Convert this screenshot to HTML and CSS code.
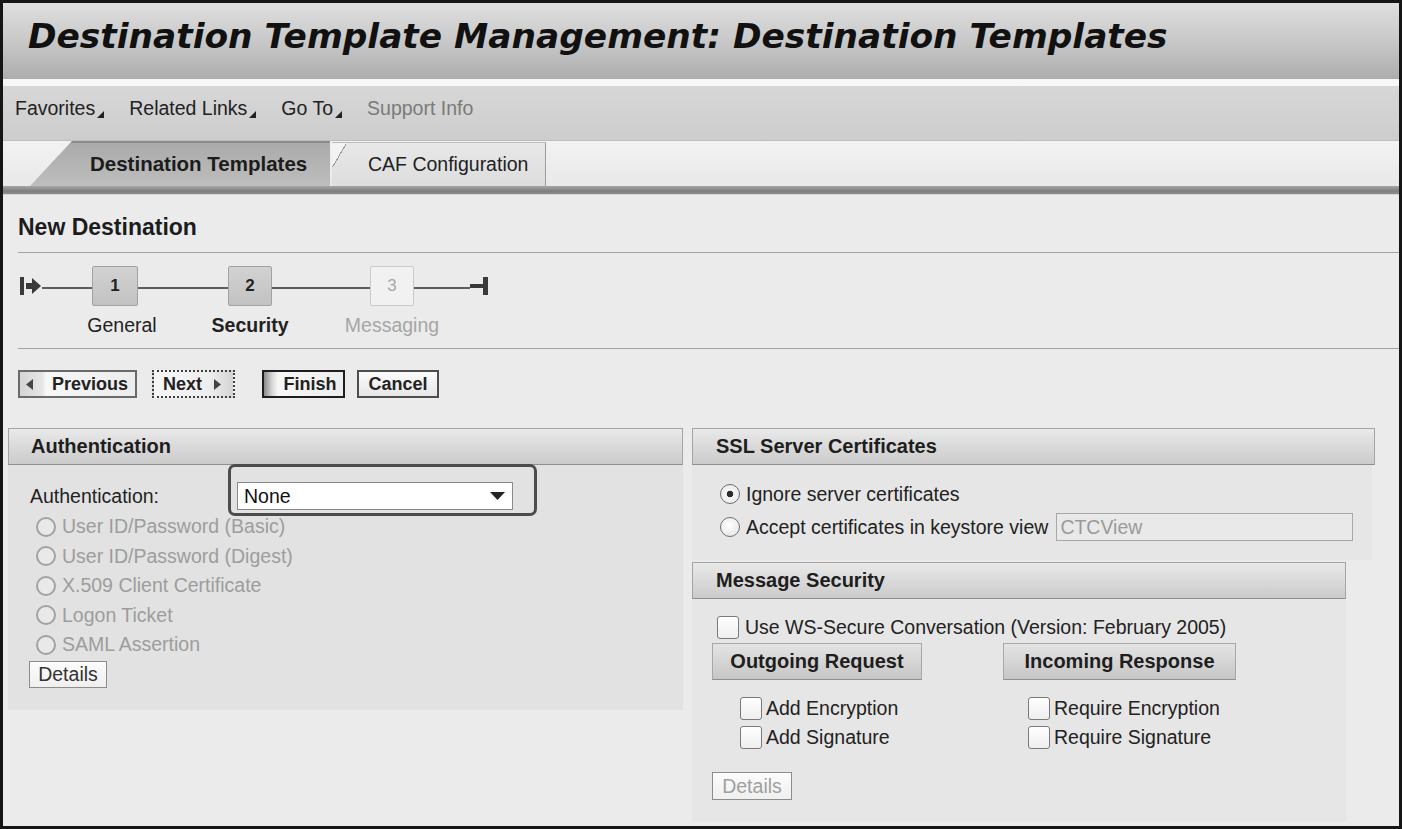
FILE: index.html
```html
<!DOCTYPE html>
<html lang="en">
<head>
<meta charset="utf-8">
<title>Destination Template Management</title>
<link rel="stylesheet" href="styles.css">
</head>
<body>
<div class="frame">
  <header class="titlebar"><h1>Destination Template Management: Destination Templates</h1></header>
  <nav class="toolbar">
    <span class="menu">Favorites<svg class="corner" viewBox="0 0 7 7" width="7" height="7"><polygon points="7,0 7,7 0,7"/></svg></span>
    <span class="menu">Related Links<svg class="corner" viewBox="0 0 7 7" width="7" height="7"><polygon points="7,0 7,7 0,7"/></svg></span>
    <span class="menu">Go To<svg class="corner" viewBox="0 0 7 7" width="7" height="7"><polygon points="7,0 7,7 0,7"/></svg></span>
    <span class="menu menu-muted">Support Info</span>
  </nav>
  <div class="tabstrip">
    <div class="tab tab-active">Destination Templates</div>
    <div class="tab tab-idle">CAF Configuration</div>
  </div>
  <div class="tabband"></div>
  <main class="content">
    <div class="wizard">
      <h2 class="page-title">New Destination</h2>
      <div class="rule"></div>
      <div class="roadmap">
        <svg class="rm-start" viewBox="0 0 22 18" width="22" height="18"><rect x="0" y="0" width="4" height="18"/><polygon points="6,6 12,6 12,1 21,9 12,17 12,12 6,12"/></svg>
        <span class="rm-line"></span>
        <span class="rm-box rm-done">1</span>
        <span class="rm-line"></span>
        <span class="rm-box rm-done">2</span>
        <span class="rm-line"></span>
        <span class="rm-box rm-todo">3</span>
        <span class="rm-line"></span>
        <svg class="rm-end" viewBox="0 0 18 18" width="18" height="18"><rect x="0" y="7" width="14" height="4"/><rect x="13" y="0" width="5" height="18"/></svg>
        <span class="rm-label l1">General</span>
        <span class="rm-label l2">Security</span>
        <span class="rm-label l3">Messaging</span>
      </div>
      <div class="rule"></div>
      <div class="actions">
        <button class="btn btn-prev"><svg class="tri" viewBox="0 0 7 11" width="7" height="11"><polygon points="7,0 7,11 0,5.5"/></svg>Previous</button>
        <button class="btn btn-next">Next<svg class="tri" viewBox="0 0 7 11" width="7" height="11"><polygon points="0,0 7,5.5 0,11"/></svg></button>
        <button class="btn btn-finish">Finish</button>
        <button class="btn btn-cancel">Cancel</button>
      </div>
    </div>

    <div class="panels">
      <section class="panel panel-auth">
        <div class="panel-head">Authentication</div>
        <div class="panel-body auth-body">
          <div class="form-row">
            <span class="form-label">Authentication:</span>
            <div class="select-wrap">
              <div class="select"><span>None</span><svg class="caret" viewBox="0 0 15 8" width="15" height="8"><polygon points="0,0 15,0 7.5,8"/></svg></div>
              <div class="highlight"></div>
            </div>
          </div>
          <ul class="radio-list">
            <li class="opt disabled"><span class="radio"></span>User ID/Password (Basic)</li>
            <li class="opt disabled"><span class="radio"></span>User ID/Password (Digest)</li>
            <li class="opt disabled"><span class="radio"></span>X.509 Client Certificate</li>
            <li class="opt disabled"><span class="radio"></span>Logon Ticket</li>
            <li class="opt disabled"><span class="radio"></span>SAML Assertion</li>
          </ul>
          <button class="btn-plain btn-details-auth">Details</button>
        </div>
      </section>

      <div class="col-right">
        <section class="panel panel-ssl">
          <div class="panel-head">SSL Server Certificates</div>
          <div class="panel-body ssl-body">
            <div class="opt"><span class="radio checked"></span>Ignore server certificates</div>
            <div class="opt"><span class="radio"></span>Accept certificates in keystore view<span class="text-input">CTCView</span></div>
          </div>
        </section>
        <section class="panel panel-msg">
          <div class="panel-head">Message Security</div>
          <div class="panel-body msg-body">
            <div class="check-row ws"><span class="check"></span>Use WS-Secure Conversation (Version: February 2005)</div>
            <div class="msg-cols">
              <div class="msg-col col-out">
                <div class="sect-btn sect-out">Outgoing Request</div>
                <div class="checks">
                  <div class="check-row"><span class="check"></span>Add Encryption</div>
                  <div class="check-row"><span class="check"></span>Add Signature</div>
                </div>
              </div>
              <div class="msg-col col-in">
                <div class="sect-btn sect-in">Incoming Response</div>
                <div class="checks">
                  <div class="check-row"><span class="check"></span>Require Encryption</div>
                  <div class="check-row"><span class="check"></span>Require Signature</div>
                </div>
              </div>
            </div>
            <button class="btn-plain btn-details-msg">Details</button>
          </div>
        </section>
      </div>
    </div>
  </main>
</div>
</body>
</html>
```

FILE: styles.css
```css
* { box-sizing: border-box; }
html, body { margin: 0; padding: 0; }
body {
  font-family: "Liberation Sans", Arial, sans-serif;
  font-size: 19.5px;
  color: #222;
  background: #ebebeb;
}
button { font-family: inherit; margin: 0; padding: 0; cursor: default; }

.frame {
  width: 1402px;
  height: 829px;
  border: 3px solid #151515;
  background: #ebebeb;
  overflow: hidden;
  display: flex;
  flex-direction: column;
}

/* title */
.titlebar {
  flex: none;
  height: 76px;
  padding: 13px 0 0 25px;
  background: linear-gradient(#dedede, #cbcbcb 45%, #adadad);
}
.titlebar h1 {
  margin: 0;
  font: italic bold 34.4px/40px "DejaVu Sans", Verdana, sans-serif;
  color: #111;
  white-space: nowrap;
}

/* toolbar */
.toolbar {
  flex: none;
  height: 61px;
  border-top: 7px solid #f7f7f7;
  background: linear-gradient(#d7d7d7, #cdcdcd);
  padding: 11px 0 0 12px;
  display: flex;
  align-items: flex-start;
  gap: 25px;
  line-height: 22px;
}
.menu { display: inline-flex; align-items: flex-end; color: #222; white-space: nowrap; }
.menu .corner { margin: 0 0 1px 2px; fill: #222; }
.menu-muted { color: #7a7a7a; }

/* tabs */
.tabstrip {
  flex: none;
  height: 46px;
  border-top: 1px solid #bdbdbd;
  background: linear-gradient(#f2f2f2, #e9e9e9);
  display: flex;
  align-items: flex-end;
  padding-left: 27px;
}
.tab { display: flex; align-items: center; white-space: nowrap; }
.tab-active {
  width: 300px;
  height: 45px;
  padding-left: 60px;
  font-weight: bold;
  font-size: 20.5px;
  color: #1c1c1c;
  background: linear-gradient(#8c8c8c 0 2px, #aaaaaa 2px, #bebebe);
  clip-path: polygon(42px 0, 100% 0, 100% 100%, 0 100%);
}
.tab-idle {
  position: relative;
  width: 214px;
  height: 44px;
  margin-left: 2px;
  padding-left: 36px;
  color: #222;
  background: linear-gradient(#e8e8e8, #dddddd);
  border-top: 1px solid #bcbcbc;
  border-right: 1px solid #9c9c9c;
}
.tab-idle::before {
  content: "";
  position: absolute;
  left: 0;
  top: 0;
  width: 14px;
  height: 24px;
  background: linear-gradient(to bottom right, #f3f3f3 50%, #9a9a9a 50%, #9a9a9a calc(50% + 1px), transparent calc(50% + 1px));
}
.tabband {
  flex: none;
  height: 9px;
  background: linear-gradient(#a6a6a6, #7e7e7e 65%, #8e8e8e);
  border-bottom: 1px solid #d6d6d6;
}

/* content */
.content { flex: 1; min-height: 0; }
.wizard { padding-left: 15px; }
.page-title {
  margin: 19px 0 0;
  font-size: 23px;
  line-height: 26px;
  font-weight: bold;
  color: #1c1c1c;
}
.rule { margin-top: 12px; height: 1px; background: #a2a2a2; }

.roadmap {
  margin-top: 13px;
  display: grid;
  grid-template-columns: 24px 50px 46px 90px 44px 98px 44px 56px 18px;
  grid-template-rows: 40px 22px;
  row-gap: 8px;
  align-items: center;
}
.rm-start { justify-self: end; fill: #3a3a3a; }
.rm-end { fill: #3a3a3a; }
.rm-line { height: 2px; background: #5e5e5e; margin-top: 4px; }
.rm-box {
  height: 40px;
  display: flex;
  align-items: center;
  justify-content: center;
  border-radius: 2px;
  font-weight: bold;
  font-size: 17px;
}
.rm-done {
  background: linear-gradient(#d2d2d2, #c2c2c2);
  border: 1px solid #a2a2a2;
  color: #222;
}
.rm-todo {
  background: #f1f1f1;
  border: 1px solid #c9c9c9;
  color: #a8a8a8;
  font-weight: normal;
}
.rm-label {
  grid-row: 2;
  display: flex;
  justify-content: center;
  white-space: nowrap;
  line-height: 22px;
}
.l1 { grid-column: 3; padding-left: 14px; color: #222; }
.l2 { grid-column: 5; font-weight: bold; color: #222; }
.l3 { grid-column: 7; color: #a6a6a6; }

.actions { margin-top: 21px; display: flex; }
.btn {
  height: 28px;
  display: inline-flex;
  align-items: center;
  justify-content: center;
  font-weight: bold;
  font-size: 18px;
  color: #222;
  border: 2px solid #6a6a6a;
  background: linear-gradient(#fbfbfb, #e6e6e6);
}
.btn .tri { fill: #444; }
.btn-prev {
  width: 119px;
  justify-content: flex-start;
  padding-left: 6px;
  background: linear-gradient(to right, #d4d4d4, #e6e6e6 22px, #f7f7f7 26px, #ececec);
}
.btn-prev .tri { margin-right: 19px; }
.btn-next {
  width: 83px;
  margin-left: 15px;
  justify-content: flex-start;
  padding-left: 9px;
  border: 2px dotted #3e3e3e;
  background: linear-gradient(to right, #f7f7f7, #eeeeee 55px, #d4d4d4);
}
.btn-next .tri { margin-left: 12px; }
.btn-finish {
  width: 83px;
  margin-left: 27px;
  padding-left: 13px;
  border-color: #1e1e1e;
  background: linear-gradient(to right, #8a8a8a, #d6d6d6 8px, #f7f7f7 14px, #ededed);
}
.btn-cancel { width: 82px; margin-left: 12px; border-color: #4e4e4e; }

/* panels */
.panels {
  margin-top: 30px;
  padding-left: 5px;
  display: flex;
  align-items: flex-start;
  gap: 9px;
}
.panel-head {
  height: 37px;
  display: flex;
  align-items: center;
  padding-left: 22px;
  font-weight: bold;
  font-size: 20px;
  color: #1e1e1e;
  background: linear-gradient(#e9e9e9, #cbcbcb);
  border: 1px solid #a4a4a4;
  border-bottom-color: #8f8f8f;
}
.panel-auth { width: 675px; }
.auth-body {
  height: 245px;
  background: #e2e2e2;
  padding: 17px 0 0 22px;
}
.form-row { display: flex; align-items: center; height: 28px; }
.form-label { width: 207px; color: #222; }
.select-wrap { position: relative; width: 276px; height: 28px; }
.select {
  height: 28px;
  display: flex;
  align-items: center;
  justify-content: space-between;
  padding: 0 7px 0 6px;
  background: #fff;
  border: 1px solid #8a8a8a;
  color: #111;
}
.caret { fill: #222; }
.highlight {
  position: absolute;
  left: -9px;
  top: -18px;
  right: -24px;
  bottom: -6px;
  border: 3px solid #4c4c4c;
  border-radius: 7px;
  pointer-events: none;
}
.radio-list { list-style: none; margin: 2px 0 0; padding: 0; }
.opt {
  display: flex;
  align-items: center;
  height: 29.5px;
  white-space: nowrap;
}
.radio-list .opt { padding-left: 6px; }
.radio {
  flex: none;
  width: 20px;
  height: 20px;
  margin-right: 6px;
  border-radius: 50%;
  border: 1.5px solid #6f6f6f;
  background: radial-gradient(circle at 45% 40%, #ffffff, #e2e2e2);
}
.radio.checked {
  background: radial-gradient(circle, #2e2e2e 0 3px, #f6f6f6 3.6px, #e6e6e6);
}
.opt.disabled { color: #9d9d9d; }
.opt.disabled .radio { border: 2px solid #a2a2a2; background: #e9e9e9; }

.btn-plain {
  height: 27px;
  font-size: 19.5px;
  color: #333;
  background: linear-gradient(#fcfcfc, #efefef);
  border: 1.5px solid #8c8c8c;
  display: inline-flex;
  align-items: center;
  justify-content: center;
}
.btn-details-auth { width: 78px; margin: 1.5px 0 0 -1px; }

.col-right { width: 683px; display: flex; flex-direction: column; }
.panel-ssl .panel-head, .panel-msg .panel-head { padding-left: 23px; }
.ssl-body {
  width: 680px;
  height: 95px;
  background: #e6e6e6;
  padding: 14px 0 0 28px;
  display: flex;
  flex-direction: column;
  gap: 3px;
}
.ssl-body .opt { height: 30px; }
.text-input {
  width: 297px;
  height: 28px;
  margin-left: 8px;
  padding-left: 3px;
  display: flex;
  align-items: center;
  background: #e9e9e9;
  border: 1px solid #a8a8a8;
  color: #9a9a9a;
}
.panel-msg { width: 654px; margin-top: 2px; }
.msg-body {
  height: 223px;
  background: #e6e6e6;
  padding: 16px 0 0 20px;
}
.check-row {
  display: flex;
  align-items: center;
  height: 29px;
  white-space: nowrap;
}
.check {
  flex: none;
  width: 22px;
  height: 23px;
  margin-right: 4px;
  border: 1.5px solid #7a7a7a;
  border-radius: 3px;
  background: linear-gradient(#ffffff, #eeeeee);
}
.check-row.ws { height: 25px; padding-left: 5px; }
.check-row.ws .check { margin-right: 6px; }
.msg-cols { display: flex; margin-top: 3px; }
.col-out { width: 291px; }
.sect-btn {
  height: 37px;
  display: flex;
  align-items: center;
  justify-content: center;
  font-weight: bold;
  font-size: 20px;
  color: #1e1e1e;
  background: linear-gradient(#e4e4e4, #c6c6c6);
  border: 1px solid #a8a8a8;
  border-bottom-color: #8e8e8e;
}
.sect-out { width: 210px; }
.sect-in { width: 233px; }
.checks { margin-top: 13.5px; }
.col-out .checks { padding-left: 28px; }
.col-in .checks { padding-left: 25px; }
.btn-details-msg { width: 80px; height: 28px; margin-top: 20.5px; color: #a0a0a0; }
```
